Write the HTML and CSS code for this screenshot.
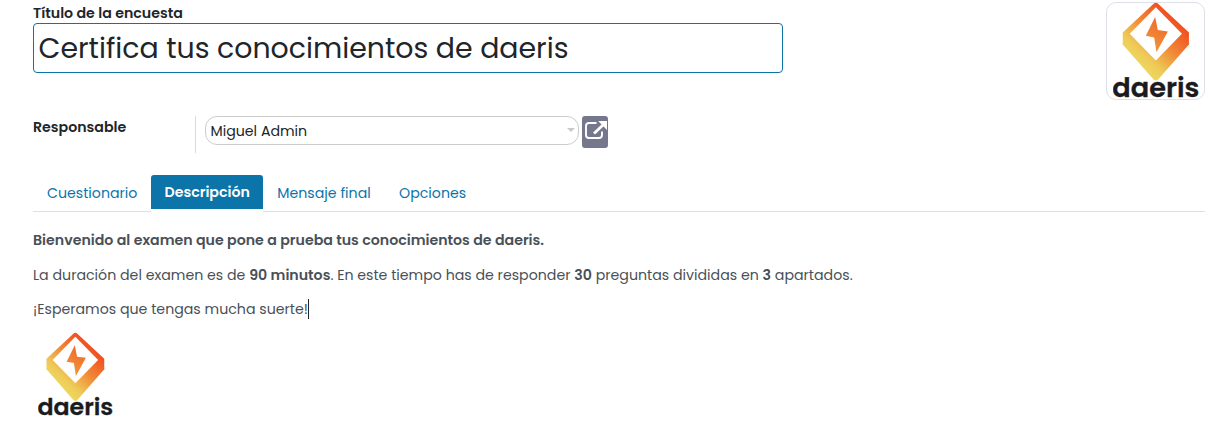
FILE: index.html
```html
<!DOCTYPE html>
<html lang="es">
<head>
<meta charset="utf-8">
<title>Encuesta</title>
<link rel="stylesheet" href="styles.css">
</head>
<body>
<svg class="defs" width="0" height="0" aria-hidden="true">
  <defs>
    <linearGradient id="flame" gradientUnits="userSpaceOnUse" x1="98" y1="195" x2="226" y2="62">
      <stop offset="0" stop-color="#eddc62"/>
      <stop offset=".25" stop-color="#eecb58"/>
      <stop offset=".6" stop-color="#f08a37"/>
      <stop offset="1" stop-color="#f1511f"/>
    </linearGradient>
    <linearGradient id="bolt" gradientUnits="userSpaceOnUse" x1="140" y1="145" x2="200" y2="60">
      <stop offset="0" stop-color="#ef9a40"/>
      <stop offset="1" stop-color="#ef6426"/>
    </linearGradient>
    <symbol id="logo" viewBox="40 6 257 290">
      <path fill="url(#flame)" d="M163 10Q168 6 173 10L267 97V133L175 238Q168 244 161 238L69 133V97Z"/>
      <path fill="#fff" d="M168 22L246 101L168 181L90 101Z"/>
      <path fill="url(#bolt)" d="M166 51L138 107L163 112L170 156L204 94L174 90Z"/>
      <text class="wordmark" x="38" y="289" textLength="260" lengthAdjust="spacingAndGlyphs">daeris</text>
    </symbol>
  </defs>
</svg>
<main class="sheet">
  <header class="head">
    <div class="title-field">
      <label class="label">Título de la encuesta</label>
      <div class="title-input"><span>Certifica tus conocimientos de daeris</span></div>
    </div>
    <div class="avatar"><svg class="logo-lg"><use href="#logo"/></svg></div>
  </header>
  <section class="row">
    <div class="row-label"><span>Responsable</span></div>
    <div class="select"><span>Miguel Admin</span><i class="caret"></i></div>
    <div class="open-btn">
      <svg width="26" height="32" viewBox="0 0 26 32" fill="none" stroke="#fff">
        <path stroke-width="1.9" d="M14.5 7H7Q4 7 4 10V19Q4 22 7 22H17Q20 22 20 19V15.5"/>
        <path stroke-width="2.8" d="M12 17.5L21.5 8.5"/>
        <path fill="#fff" stroke="none" d="M16.2 5H25V14Z"/>
      </svg>
    </div>
  </section>
  <nav class="tabs">
    <a class="tab t1"><span>Cuestionario</span></a>
    <a class="tab active"><span>Descripción</span></a>
    <a class="tab t3"><span>Mensaje final</span></a>
    <a class="tab t4"><span>Opciones</span></a>
  </nav>
  <article class="body">
    <p class="intro"><b>Bienvenido al examen que pone a prueba tus conocimientos de daeris.</b></p>
    <p class="details">La duración del examen es de <b>90 minutos</b>. En este tiempo has de responder <b>30</b> preguntas divididas en <b>3</b> apartados.</p>
    <p class="luck"><span>¡Esperamos que tengas mucha suerte!</span><i class="cursor"></i></p>
    <svg class="logo-sm"><use href="#logo"/></svg>
  </article>
</main>
</body>
</html>
```
FILE: styles.css
```css
* { box-sizing: border-box; }
body { margin: 0; background: #fff; color: #212529; font: 14.18px/20px Poppins, Inter, "Open Sans", sans-serif; white-space: nowrap; }
b { font-weight: 600; }
.defs { position: absolute; }
.sheet { padding: 2px 15px 0 33px; }
.head { display: flex; justify-content: space-between; height: 114px; }
.title-field { width: 750px; }
.label { display: block; height: 21px; line-height: 23px; font-weight: 600; }
.title-input { height: 50px; border: 1px solid #0b74a9; border-radius: 4px; padding-left: 4.5px; font-size: 28.38px; line-height: 49px; }
.avatar { width: 99px; height: 98px; border: 1px solid #dee0e8; border-radius: 10px; }
.logo-lg { display: block; width: 86px; height: 97px; margin: -1px 0 0 6px; overflow: visible; }
.wordmark { font: 600 80px Poppins, Inter, sans-serif; fill: #1b1b1e; stroke: #1b1b1e; stroke-width: 1px; stroke-linejoin: round; }
.row { display: flex; height: 59px; }
.row-label { width: 163px; height: 37px; border-right: 1px solid #d9dadd; line-height: 22px; font-weight: 600; }
.select { display: flex; justify-content: space-between; width: 374px; height: 29px; margin-left: 9px; border: 1px solid #ccc; border-radius: 12px; padding: 0 3px 0 4.5px; line-height: 28px; }
.caret { width: 8px; height: 4px; margin-top: 11px; background: #c9c9c9; clip-path: polygon(0 0, 100% 0, 50% 100%); }
.open-btn { width: 26px; height: 32px; margin-left: 3px; border-radius: 3px; background: #75788c; }
.open-btn svg { display: block; }
.tabs { display: flex; height: 37px; border-bottom: 1px solid #dee0e5; }
.tab { height: 36px; line-height: 36px; color: #0b74a9; }
.t1 { width: 118px; padding-left: 14px; }
.active { width: 112px; height: 37px; padding-left: 13.5px; border-radius: 3px 3px 0 0; line-height: 34px; font-weight: 600; color: #fff; background: linear-gradient(#0b74a9 34px, #fff 34px); }
.t3 { width: 122px; padding-left: 14.3px; }
.t4 { padding-left: 14px; }
.body { padding-top: 18px; color: #495057; }
.body p { margin: 0 0 14.5px; }
.luck { display: flex; }
.cursor { width: 1px; height: 20px; background: #212529; }
.logo-sm { display: block; width: 75px; height: 85px; margin: -2px 0 0 5px; overflow: visible; }
```
